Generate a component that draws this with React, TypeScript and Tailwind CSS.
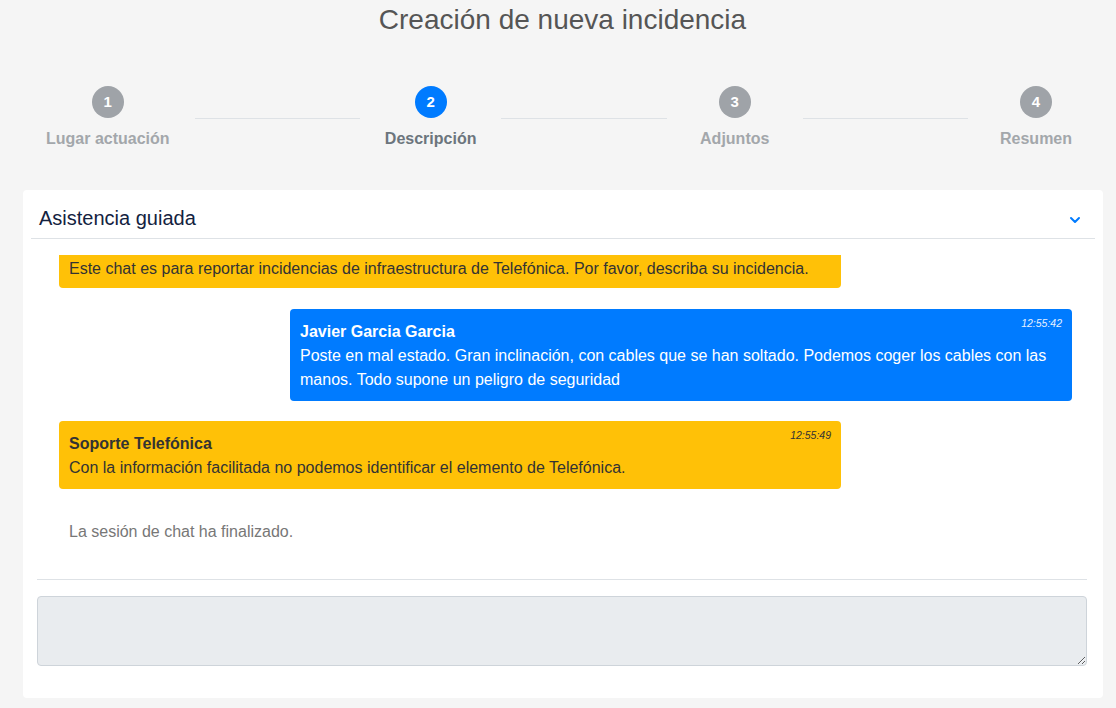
import { ChevronDown } from "lucide-react";

type Step = { n: number; label: string; active?: boolean };

const steps: Step[] = [
  { n: 1, label: "Lugar actuación" },
  { n: 2, label: "Descripción", active: true },
  { n: 3, label: "Adjuntos" },
  { n: 4, label: "Resumen" },
];

function Stepper() {
  return (
    <div className="flex items-start mt-[46px]">
      {steps.map((s, i) => (
        <div key={s.n} className="contents">
          {i > 0 && <div className="flex-1 h-px bg-[#dee2e6] mt-[32px]" />}
          <div className="min-w-[136px] px-[25px] flex flex-col items-center">
            <div
              className={
                "w-8 h-8 rounded-full flex items-center justify-center text-white text-[15px] font-bold " +
                (s.active ? "bg-[#007bff]" : "bg-[#9fa3a8]")
              }
            >
              {s.n}
            </div>
            <div
              className={
                "mt-[11px] leading-5 text-base font-bold whitespace-nowrap " +
                (s.active ? "text-[#6c757d]" : "text-[#a3a7ab]")
              }
            >
              {s.label}
            </div>
          </div>
        </div>
      ))}
    </div>
  );
}

function Bubble({
  name,
  time,
  text,
  mine,
}: {
  name: string;
  time: string;
  text: string;
  mine?: boolean;
}) {
  return (
    <div
      className={
        "relative w-[782px] rounded-[4px] px-[10px] pt-[11px] pb-[9px] leading-6 text-base " +
        (mine ? "self-end bg-[#007bff] text-white" : "self-start bg-[#ffc107] text-[#333]")
      }
    >
      <span
        className={
          "absolute right-[10px] top-[7px] text-[10.5px] italic leading-[14px] " +
          (mine ? "text-[#e6f0ff]" : "text-[#333]")
        }
      >
        {time}
      </span>
      <div className="font-bold">{name}</div>
      <div>{text}</div>
    </div>
  );
}

export default function App() {
  return (
    <div className="min-h-screen bg-[#f5f5f5] pl-[21px] pr-[12px] font-['Liberation_Sans',Arial,sans-serif]">
      <h1 className="text-center text-[28px] leading-10 text-[#555]">
        Creación de nueva incidencia
      </h1>

      <Stepper />

      <div className="mt-[41px] ml-[2px] mr-px bg-white rounded-[4px] pb-8">
        <div className="mx-2 border-b border-[#dee2e6] pt-[14px] pb-[6px] pl-2 pr-3 flex items-center justify-between">
          <span className="text-xl leading-7 text-[#13223f]">Asistencia guiada</span>
          <ChevronDown className="w-4 h-4 mt-1 text-[#007bff]" strokeWidth={3} />
        </div>

        <div className="mt-4 ml-9 mr-[31px] flex flex-col">
          <div className="self-start w-[782px] bg-[#ffc107] text-[#333] rounded-b-[4px] px-[10px] pt-[2px] pb-[7px] leading-6 text-base">
            Este chat es para reportar incidencias de infraestructura de Telefónica. Por favor, describa su incidencia.
          </div>
          <div className="mt-[21px] flex flex-col">
            <Bubble
              mine
              name="Javier Garcia Garcia"
              time="12:55:42"
              text="Poste en mal estado. Gran inclinación, con cables que se han soltado. Podemos coger los cables con las manos. Todo supone un peligro de seguridad"
            />
          </div>
          <div className="mt-5 flex flex-col">
            <Bubble
              name="Soporte Telefónica"
              time="12:55:49"
              text="Con la información facilitada no podemos identificar el elemento de Telefónica."
            />
          </div>
          <div className="mt-[31px] pl-[10px] leading-6 text-base text-[#777]">
            La sesión de chat ha finalizado.
          </div>
        </div>

        <div className="mt-[35px] ml-[14px] mr-4 border-t border-[#dee2e6] pt-4">
          <textarea
            disabled
            className="block w-full h-[70px] rounded-[4px] border border-[#ced4da] bg-[#e9ecef]"
          />
        </div>
      </div>
    </div>
  );
}
